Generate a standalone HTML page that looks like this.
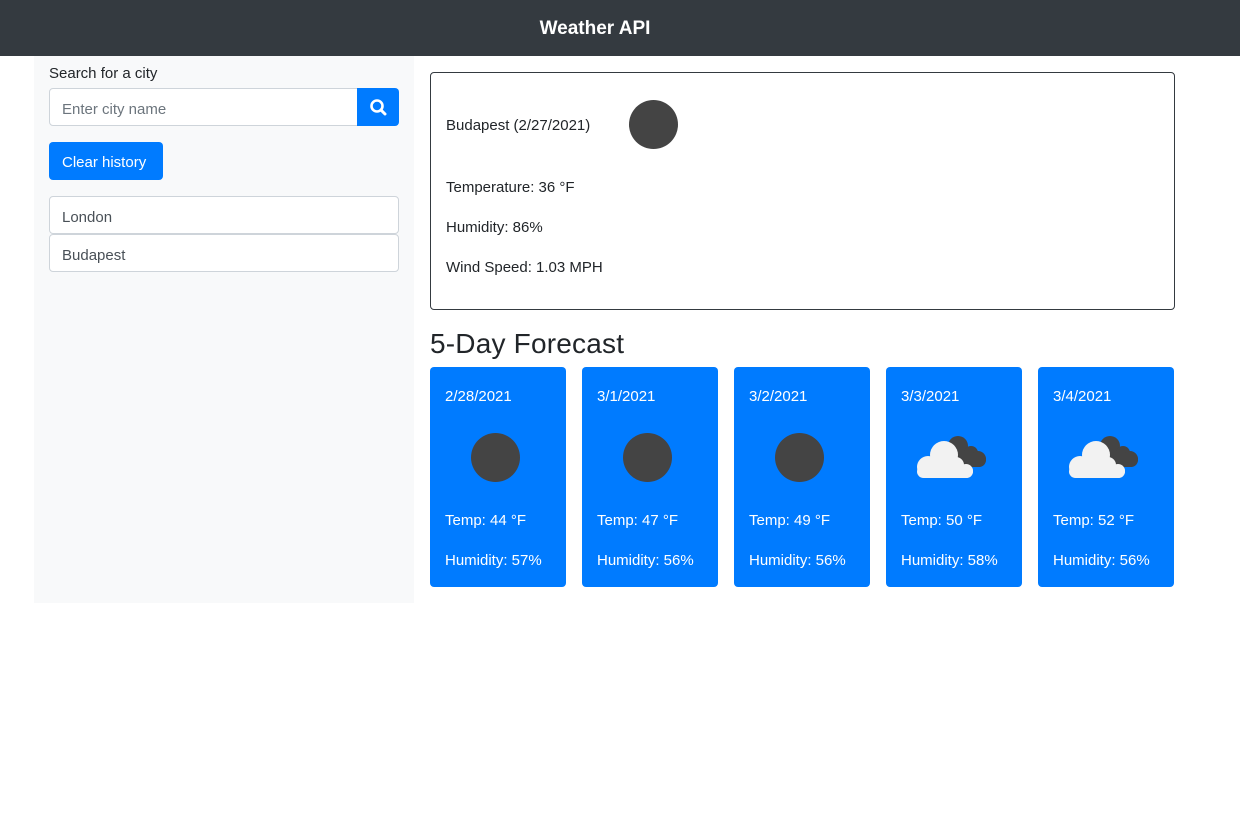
<!DOCTYPE html>
<html><head><meta charset="utf-8"><style>
*{box-sizing:border-box;margin:0;padding:0}
body{width:1240px;height:822px;background:#fff;font-family:"Liberation Sans",sans-serif;color:#212529;font-size:15px;position:relative;overflow:hidden}
.nav{height:56px;background:#343a40;color:#fff;font-weight:bold;font-size:19px;text-align:center;line-height:58px;padding-right:50px}
.side{position:absolute;left:34px;top:56px;width:380px;height:547px;background:#f8f9fa}
.abs{position:absolute}
.inp{left:15px;top:32px;width:309px;height:38px;border:1px solid #ced4da;border-radius:4px 0 0 4px;background:#fff;color:#6c757d;padding:12px 12px;font-size:15px}
.sbtn{left:323px;top:32px;width:42px;height:38px;background:#007bff;border-radius:0 4px 4px 0}
.clr{left:15px;top:86px;width:114px;height:38px;background:#007bff;border-radius:4px;color:#fff;padding:12px 13px;font-size:15px}
.li{left:15px;width:350px;height:38px;border:1px solid #ced4da;border-radius:4px;background:#fff;color:#495057;padding:12px 12px}
.main{left:430px;top:72px;width:745px;height:238px;border:1px solid #343a40;border-radius:4px}
.main p{position:absolute;left:15px;font-size:15px}
.circle{position:absolute;width:49px;height:49px;border-radius:50%;background:#444}
h2{position:absolute;left:430px;top:328px;font-size:28px;font-weight:normal;letter-spacing:0.2px}
.card{position:absolute;top:367px;width:136px;height:220px;background:#007bff;border-radius:4px;color:#fff}
.card p{position:absolute;left:15px;font-size:15px}
</style></head><body>
<div class="nav">Weather API</div>
<div class="side">
<div class="abs" style="left:15px;top:9px">Search for a city</div>
<div class="abs inp">Enter city name</div>
<div class="abs sbtn"><svg width="42" height="38" viewBox="0 0 42 38"><circle cx="20" cy="18" r="5.5" fill="none" stroke="#fff" stroke-width="2.6"/><line x1="24" y1="22" x2="28" y2="26" stroke="#fff" stroke-width="3" stroke-linecap="round"/></svg></div>
<div class="abs clr">Clear history</div>
<div class="abs li" style="top:140px">London</div>
<div class="abs li" style="top:178px">Budapest</div>
</div>
<div class="abs main">
<p style="top:44px">Budapest (2/27/2021)</p>
<div class="circle" style="left:198px;top:27px"></div>
<p style="top:106px">Temperature: 36 °F</p>
<p style="top:146px">Humidity: 86%</p>
<p style="top:186px">Wind Speed: 1.03 MPH</p>
</div>
<h2>5-Day Forecast</h2>
<div class="card" style="left:430px"><p style="top:21px">2/28/2021</p><div class="circle" style="left:41px;top:66px"></div><p style="top:145px">Temp: 44 °F</p><p style="top:185px">Humidity: 57%</p></div>
<div class="card" style="left:582px"><p style="top:21px">3/1/2021</p><div class="circle" style="left:41px;top:66px"></div><p style="top:145px">Temp: 47 °F</p><p style="top:185px">Humidity: 56%</p></div>
<div class="card" style="left:734px"><p style="top:21px">3/2/2021</p><div class="circle" style="left:41px;top:66px"></div><p style="top:145px">Temp: 49 °F</p><p style="top:185px">Humidity: 56%</p></div>
<div class="card" style="left:886px"><p style="top:21px">3/3/2021</p>
<svg class="abs" style="left:30px;top:68px" width="72" height="46" viewBox="0 0 72 46"><g fill="#444"><circle cx="42" cy="11" r="10"/><circle cx="55" cy="18" r="7"/><circle cx="62" cy="24" r="8"/><rect x="40" y="18" width="30" height="14" rx="7"/></g><g fill="#f2f2f2"><circle cx="12" cy="32" r="11"/><circle cx="28" cy="20" r="14"/><circle cx="40" cy="30" r="8"/><circle cx="50" cy="36" r="7"/><rect x="1" y="30" width="56" height="13" rx="6.5"/></g></svg>
<p style="top:145px">Temp: 50 °F</p><p style="top:185px">Humidity: 58%</p></div>
<div class="card" style="left:1038px"><p style="top:21px">3/4/2021</p>
<svg class="abs" style="left:30px;top:68px" width="72" height="46" viewBox="0 0 72 46"><g fill="#444"><circle cx="42" cy="11" r="10"/><circle cx="55" cy="18" r="7"/><circle cx="62" cy="24" r="8"/><rect x="40" y="18" width="30" height="14" rx="7"/></g><g fill="#f2f2f2"><circle cx="12" cy="32" r="11"/><circle cx="28" cy="20" r="14"/><circle cx="40" cy="30" r="8"/><circle cx="50" cy="36" r="7"/><rect x="1" y="30" width="56" height="13" rx="6.5"/></g></svg>
<p style="top:145px">Temp: 52 °F</p><p style="top:185px">Humidity: 56%</p></div>
</body></html>
